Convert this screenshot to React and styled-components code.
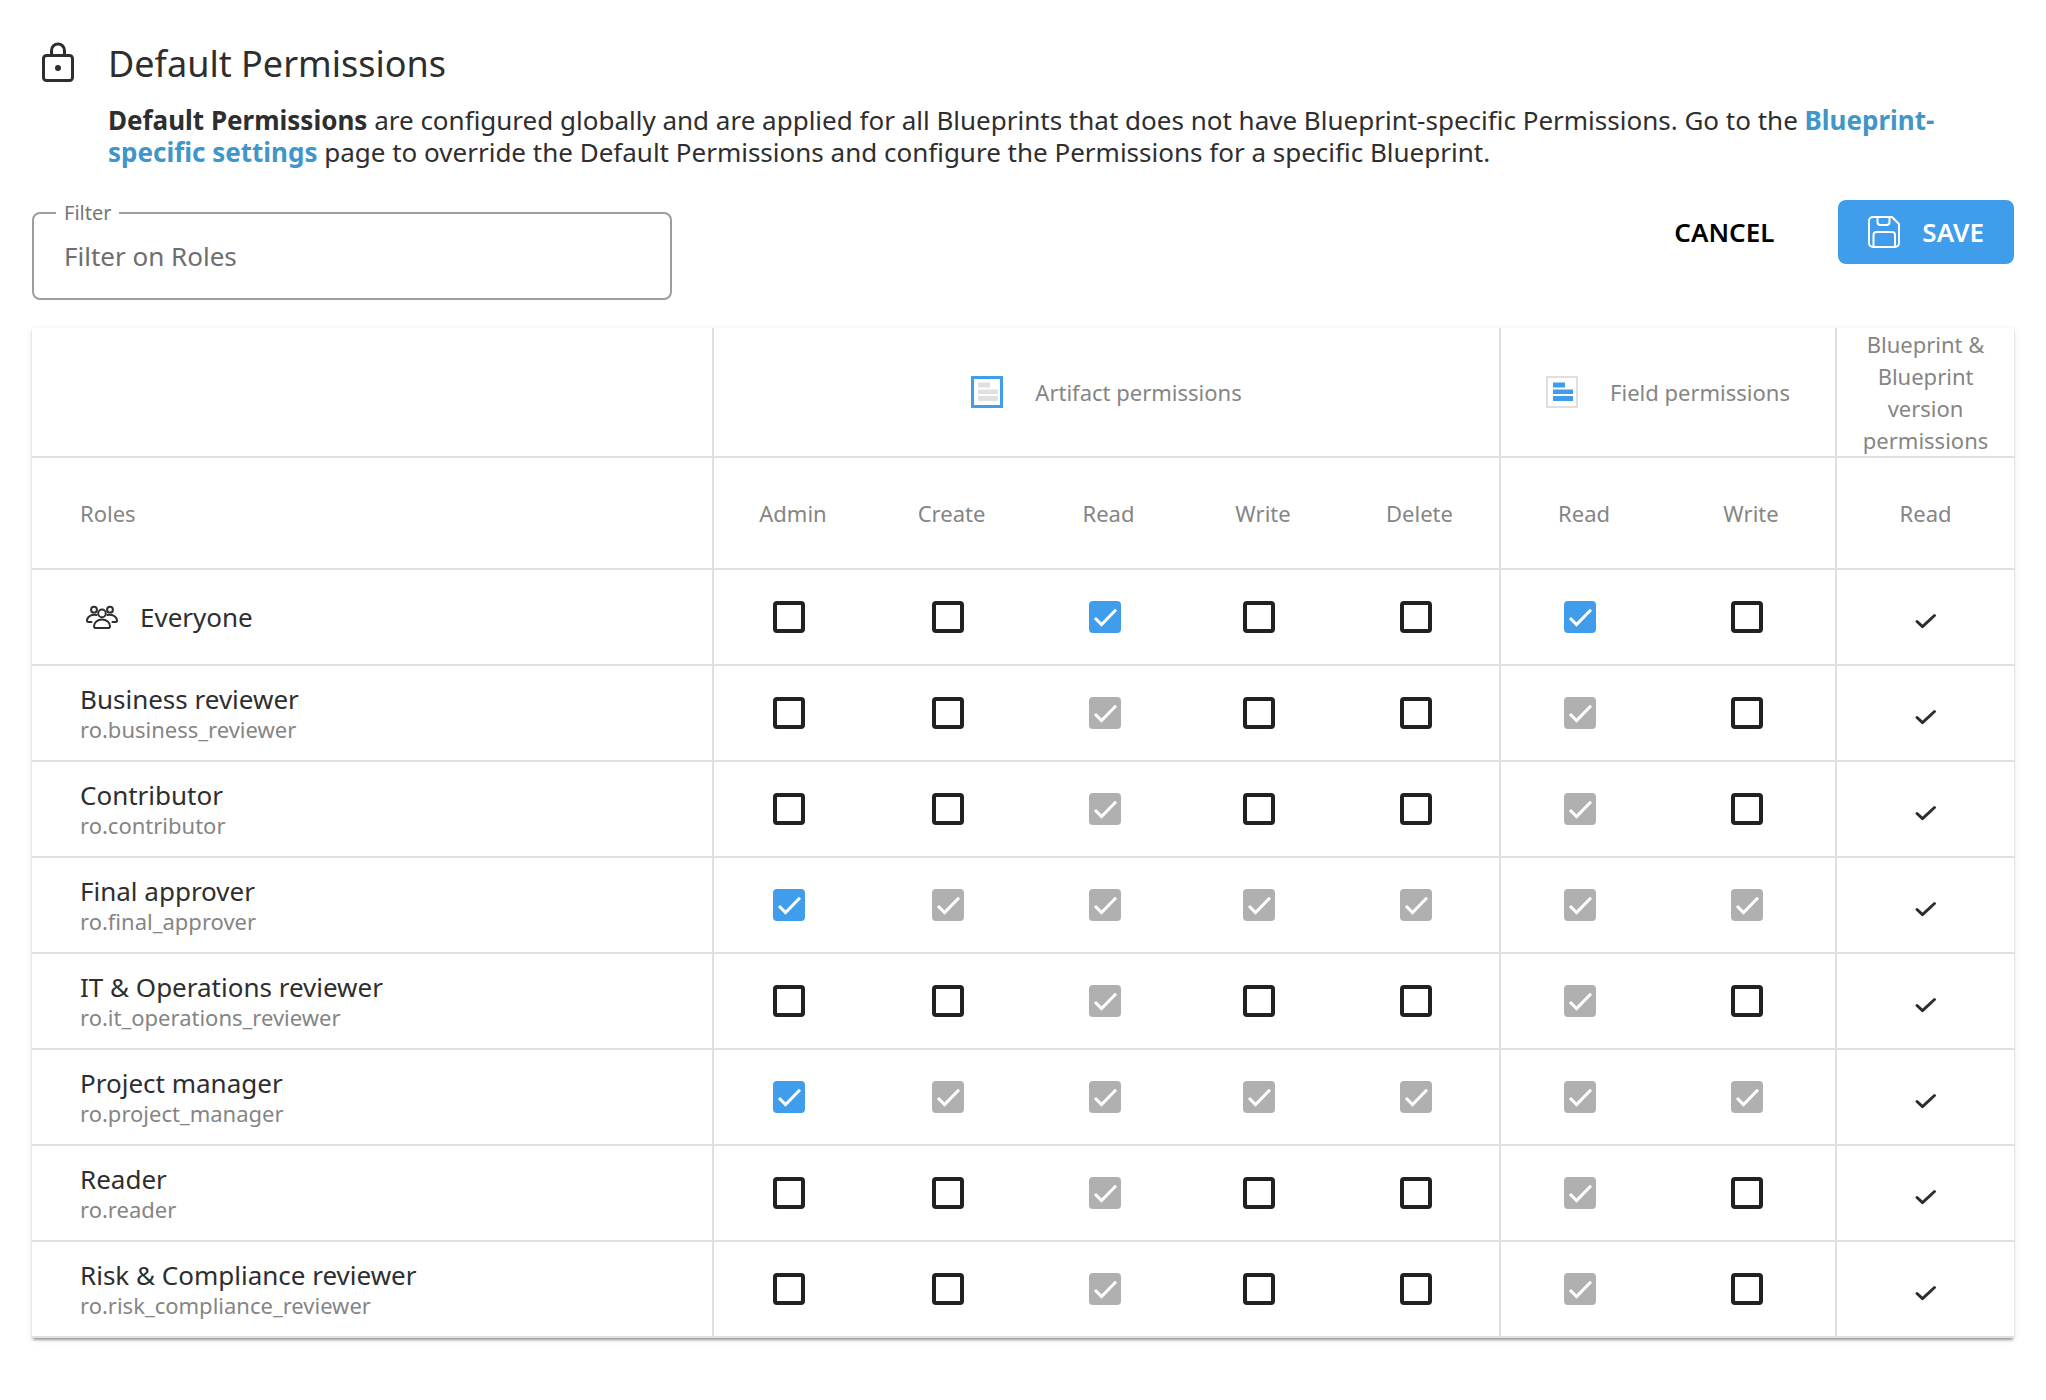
import React, { useState } from "react";
import styled, { createGlobalStyle } from "styled-components";

const color = {
  text: "#2e2e2e",
  muted: "#858585",
  line: "#e0e0e0",
  blue: "#409deb",
  link: "#4096c8",
  disabled: "#b0b0b0",
};

const GlobalStyle = createGlobalStyle`
  *, *::before, *::after { box-sizing: border-box; }
  body {
    margin: 0;
    background: #fff;
    color: ${color.text};
    font-family: "Noto Sans", "Open Sans", sans-serif;
    font-size: 26px;
    line-height: 32px;
  }
  button, input { font: inherit; }
`;

const Page = styled.main`
  padding: 40px 32px 62px;
`;

const Header = styled.header`
  display: grid;
  grid-template-columns: 52px 1fr;
  column-gap: 24px;
  row-gap: 16px;
`;

const LockIcon = styled.svg`
  width: 32px;
  height: 40px;
  margin: 2px 0 0 10px;
`;

const Title = styled.h1`
  margin: 0;
  font-size: 36px;
  font-weight: 400;
  line-height: 48px;
`;

const Intro = styled.p`
  grid-column: 2;
  margin: 0;
`;

const IntroLink = styled.a`
  color: ${color.link};
  font-weight: 700;
  text-decoration: none;
`;

const Toolbar = styled.form`
  display: flex;
  justify-content: space-between;
  align-items: flex-start;
  padding: 32px 0 28px;
`;

const FilterBox = styled.fieldset`
  width: 640px;
  margin: 0;
  padding: 0 22px 12px;
  border: 2px solid #9e9e9e;
  border-radius: 8px;
`;

const FilterLegend = styled.legend`
  padding: 0 8px;
  color: #757575;
  font-size: 20px;
  line-height: 26px;
`;

const FilterInput = styled.input`
  display: block;
  width: 100%;
  height: 60px;
  padding: 0 8px;
  border: 0;
  outline: 0;
  background: transparent;
  color: ${color.text};
  &::placeholder { color: #6e6e6e; opacity: 1; }
`;

const Actions = styled.div`
  display: flex;
  gap: 32px;
`;

const Button = styled.button`
  display: flex;
  align-items: center;
  gap: 22px;
  height: 64px;
  padding: 0 ${(p) => (p.$primary ? 30 : 32)}px;
  border: 0;
  border-radius: 8px;
  background: ${(p) => (p.$primary ? color.blue : "transparent")};
  color: ${(p) => (p.$primary ? "#fff" : "#000")};
  font-weight: 600;
  cursor: pointer;
`;

const Icon = styled.svg`
  flex: none;
  width: 32px;
  height: 32px;
`;

const Table = styled.table`
  width: 100%;
  table-layout: fixed;
  border-collapse: separate;
  border-spacing: 0;
  box-shadow: 0 4px 2px -2px rgba(0, 0, 0, 0.2), 0 2px 2px rgba(0, 0, 0, 0.14),
    0 2px 6px rgba(0, 0, 0, 0.12);
`;

const HeadCell = styled.th`
  height: ${(p) => (p.$tall ? 130 : 112)}px;
  padding: 0 ${(p) => (p.$narrow ? 16 : 0)}px;
  border-bottom: 2px solid ${color.line};
  border-right: ${(p) => (p.$divider ? 2 : 0)}px solid ${color.line};
  color: ${color.muted};
  font-size: 22px;
  font-weight: 400;
  text-align: center;
`;

const RolesHead = styled(HeadCell)`
  padding-left: 48px;
  text-align: left;
`;

const GroupLabel = styled.span`
  display: flex;
  justify-content: center;
  align-items: center;
  gap: 32px;
`;

const RoleCell = styled.th`
  height: 96px;
  padding: 0 0 0 48px;
  border-bottom: 2px solid ${color.line};
  border-right: 2px solid ${color.line};
  font-weight: 400;
  text-align: left;
`;

const EveryoneLabel = styled.span`
  display: flex;
  align-items: center;
  gap: 22px;
  padding-left: 6px;
`;

const RoleName = styled.span`
  display: block;
`;

const RoleId = styled.span`
  display: block;
  color: ${color.muted};
  font-size: 22px;
  line-height: 28px;
`;

const CheckCell = styled.td`
  padding: 0 8px 0 0;
  border-bottom: 2px solid ${color.line};
  border-right: ${(p) => (p.$divider ? 2 : 0)}px solid ${color.line};
`;

const GrantedCell = styled.td`
  padding: 8px 0 0;
  border-bottom: 2px solid ${color.line};
`;

const GrantedIcon = styled(Icon)`
  display: block;
  margin: 0 auto;
`;

const CheckWrap = styled.span`
  display: grid;
  width: 32px;
  height: 32px;
  margin: 0 auto;
  > * { grid-area: 1 / 1; }
`;

const CheckInput = styled.input`
  appearance: none;
  width: 32px;
  height: 32px;
  margin: 0;
  border: 4px solid #212121;
  border-radius: 4px;
  background: #fff;
  cursor: pointer;
  &:checked { border-color: ${color.blue}; background: ${color.blue}; }
  &:disabled { border-color: ${color.disabled}; background: ${color.disabled}; cursor: default; }
`;

const CheckMark = styled(Icon)`
  pointer-events: none;
`;

function Checkbox({ label, disabled, checked, onChange }) {
  return (
    <CheckWrap>
      <CheckInput type="checkbox" aria-label={label} checked={checked} disabled={disabled} onChange={onChange} />
      {checked && (
        <CheckMark viewBox="0 0 32 32" fill="none" stroke="#fff" strokeWidth="3" aria-hidden="true">
          <path d="M6 17l6.5 6.5L27 8.8" />
        </CheckMark>
      )}
    </CheckWrap>
  );
}

function SaveIcon() {
  return (
    <Icon viewBox="0 0 32 32" fill="none" stroke="#fff" strokeWidth="2" strokeLinejoin="round" aria-hidden="true">
      <path d="M5 1h19l7 7v19a4 4 0 0 1-4 4H5a4 4 0 0 1-4-4V5a4 4 0 0 1 4-4z" />
      <path d="M9.500 1v5a3 3 0 0 0 3 3h6a3 3 0 0 0 3-3V1" />
      <path d="M5.500 31V19a3 3 0 0 1 3-3h15.500a3 3 0 0 1 3 3v12" />
    </Icon>
  );
}

function FormIcon({ frame, bars, frameWidth }) {
  const inset = frameWidth / 2;
  return (
    <Icon viewBox="0 0 32 32" aria-hidden="true">
      <rect x={inset} y={inset} width={32 - frameWidth} height={32 - frameWidth} fill="#fff" stroke={frame} strokeWidth={frameWidth} />
      <path fill={bars} d="M7 6.500h12v5H7zM7 13.500h20v4.500H7zM7 20h20v5H7z" />
    </Icon>
  );
}

function PeopleIcon() {
  return (
    <Icon viewBox="0 0 32 32" fill="none" stroke={color.text} strokeWidth="2" strokeLinecap="round" strokeLinejoin="round" aria-hidden="true">
      <circle cx="16" cy="12.400" r="3.800" />
      <path d="M16 18.500c-4.500 0-8 3-8 6.700 0 1.200.8 1.800 1.900 1.800h12.200c1.100 0 1.900-.6 1.900-1.800 0-3.700-3.500-6.700-8-6.700z" />
      <circle cx="8" cy="8.700" r="2.900" />
      <circle cx="24" cy="8.700" r="2.900" />
      <path d="M10.500 14C5.500 12.800 1 16 1 19.500c0 1 .6 1.500 1.500 1.500H5.500" />
      <path d="M21.500 14C26.500 12.800 31 16 31 19.500c0 1-.6 1.500-1.500 1.500H26.500" />
    </Icon>
  );
}

const columnWidths = [682, 158, 159, 155, 154, 161, 166, 170, 177];

const permissions = [
  { key: "a-admin", label: "Admin" },
  { key: "a-create", label: "Create" },
  { key: "a-read", label: "Read" },
  { key: "a-write", label: "Write" },
  { key: "a-delete", label: "Delete", divider: true },
  { key: "f-read", label: "Read" },
  { key: "f-write", label: "Write", divider: true },
];

const readOnly = ["a-read", "f-read"];
const implied = permissions.map((p) => p.key).filter((k) => k !== "a-admin");

const initialRoles = [
  { name: "Everyone", granted: readOnly, inherited: [] },
  { name: "Business reviewer", id: "ro.business_reviewer", granted: [], inherited: readOnly },
  { name: "Contributor", id: "ro.contributor", granted: [], inherited: readOnly },
  { name: "Final approver", id: "ro.final_approver", granted: ["a-admin"], inherited: implied },
  { name: "IT & Operations reviewer", id: "ro.it_operations_reviewer", granted: [], inherited: readOnly },
  { name: "Project manager", id: "ro.project_manager", granted: ["a-admin"], inherited: implied },
  { name: "Reader", id: "ro.reader", granted: [], inherited: readOnly },
  { name: "Risk & Compliance reviewer", id: "ro.risk_compliance_reviewer", granted: [], inherited: readOnly },
];

export default function App() {
  const [roles, setRoles] = useState(initialRoles);
  const [filter, setFilter] = useState("");

  const toggle = (name, key) =>
    setRoles((all) =>
      all.map((r) =>
        r.name !== name
          ? r
          : { ...r, granted: r.granted.includes(key) ? r.granted.filter((k) => k !== key) : [...r.granted, key] }
      )
    );

  const visible = roles.filter((r) => r.name.toLowerCase().includes(filter.toLowerCase()));

  return (
    <Page>
      <GlobalStyle />
      <Header>
        <LockIcon viewBox="0 0 32 40" fill="none" stroke={color.text} strokeWidth="3" aria-hidden="true">
          <rect x="1.500" y="13.500" width="29" height="25" rx="3" />
          <path d="M9.500 13V8.500a6.500 6.500 0 0 1 13 0V13" />
          <circle cx="16" cy="26" r="3" fill={color.text} stroke="none" />
        </LockIcon>
        <Title>Default Permissions</Title>
        <Intro>
          <strong>Default Permissions</strong> are configured globally and are applied for all Blueprints that does
          not have Blueprint-specific Permissions. Go to the{" "}
          <IntroLink href="#blueprints">Blueprint-specific settings</IntroLink> page to override the Default
          Permissions and configure the Permissions for a specific Blueprint.
        </Intro>
      </Header>

      <Toolbar onSubmit={(e) => e.preventDefault()}>
        <FilterBox>
          <FilterLegend>
            <label htmlFor="role-filter">Filter</label>
          </FilterLegend>
          <FilterInput
            id="role-filter"
            type="text"
            placeholder="Filter on Roles"
            value={filter}
            onChange={(e) => setFilter(e.target.value)}
          />
        </FilterBox>
        <Actions>
          <Button type="button" onClick={() => setRoles(initialRoles)}>CANCEL</Button>
          <Button type="submit" $primary>
            <SaveIcon />
            SAVE
          </Button>
        </Actions>
      </Toolbar>

      <Table>
        <colgroup>
          {columnWidths.map((w, i) => (
            <col key={i} width={w} />
          ))}
        </colgroup>
        <thead>
          <tr>
            <HeadCell as="td" $tall $divider />
            <HeadCell scope="colgroup" colSpan={5} $tall $divider>
              <GroupLabel>
                <FormIcon frame={color.blue} frameWidth={3} bars={color.line} />
                Artifact permissions
              </GroupLabel>
            </HeadCell>
            <HeadCell scope="colgroup" colSpan={2} $tall $divider>
              <GroupLabel>
                <FormIcon frame={color.line} frameWidth={2} bars={color.blue} />
                Field permissions
              </GroupLabel>
            </HeadCell>
            <HeadCell scope="col" $tall $narrow>Blueprint &amp; Blueprint version permissions</HeadCell>
          </tr>
          <tr>
            <RolesHead scope="col" $divider>Roles</RolesHead>
            {permissions.map((p) => (
              <HeadCell key={p.key} scope="col" $divider={p.divider}>{p.label}</HeadCell>
            ))}
            <HeadCell scope="col">Read</HeadCell>
          </tr>
        </thead>
        <tbody>
          {visible.map((role) => (
            <tr key={role.name}>
              <RoleCell scope="row">
                {role.id ? (
                  <>
                    <RoleName>{role.name}</RoleName>
                    <RoleId>{role.id}</RoleId>
                  </>
                ) : (
                  <EveryoneLabel>
                    <PeopleIcon />
                    {role.name}
                  </EveryoneLabel>
                )}
              </RoleCell>
              {permissions.map((p) => {
                const inherited = role.inherited.includes(p.key);
                return (
                  <CheckCell key={p.key} $divider={p.divider}>
                    <Checkbox
                      label={`${p.label}, ${role.name}`}
                      disabled={inherited}
                      checked={inherited || role.granted.includes(p.key)}
                      onChange={() => toggle(role.name, p.key)}
                    />
                  </CheckCell>
                );
              })}
              <GrantedCell>
                <GrantedIcon viewBox="0 0 32 32" fill="none" stroke={color.text} strokeWidth="3" strokeLinecap="round" strokeLinejoin="round" role="img" aria-label="Granted">
                  <path d="M7 16.500l5.500 5.200L24.500 10.500" />
                </GrantedIcon>
              </GrantedCell>
            </tr>
          ))}
        </tbody>
      </Table>
    </Page>
  );
}
